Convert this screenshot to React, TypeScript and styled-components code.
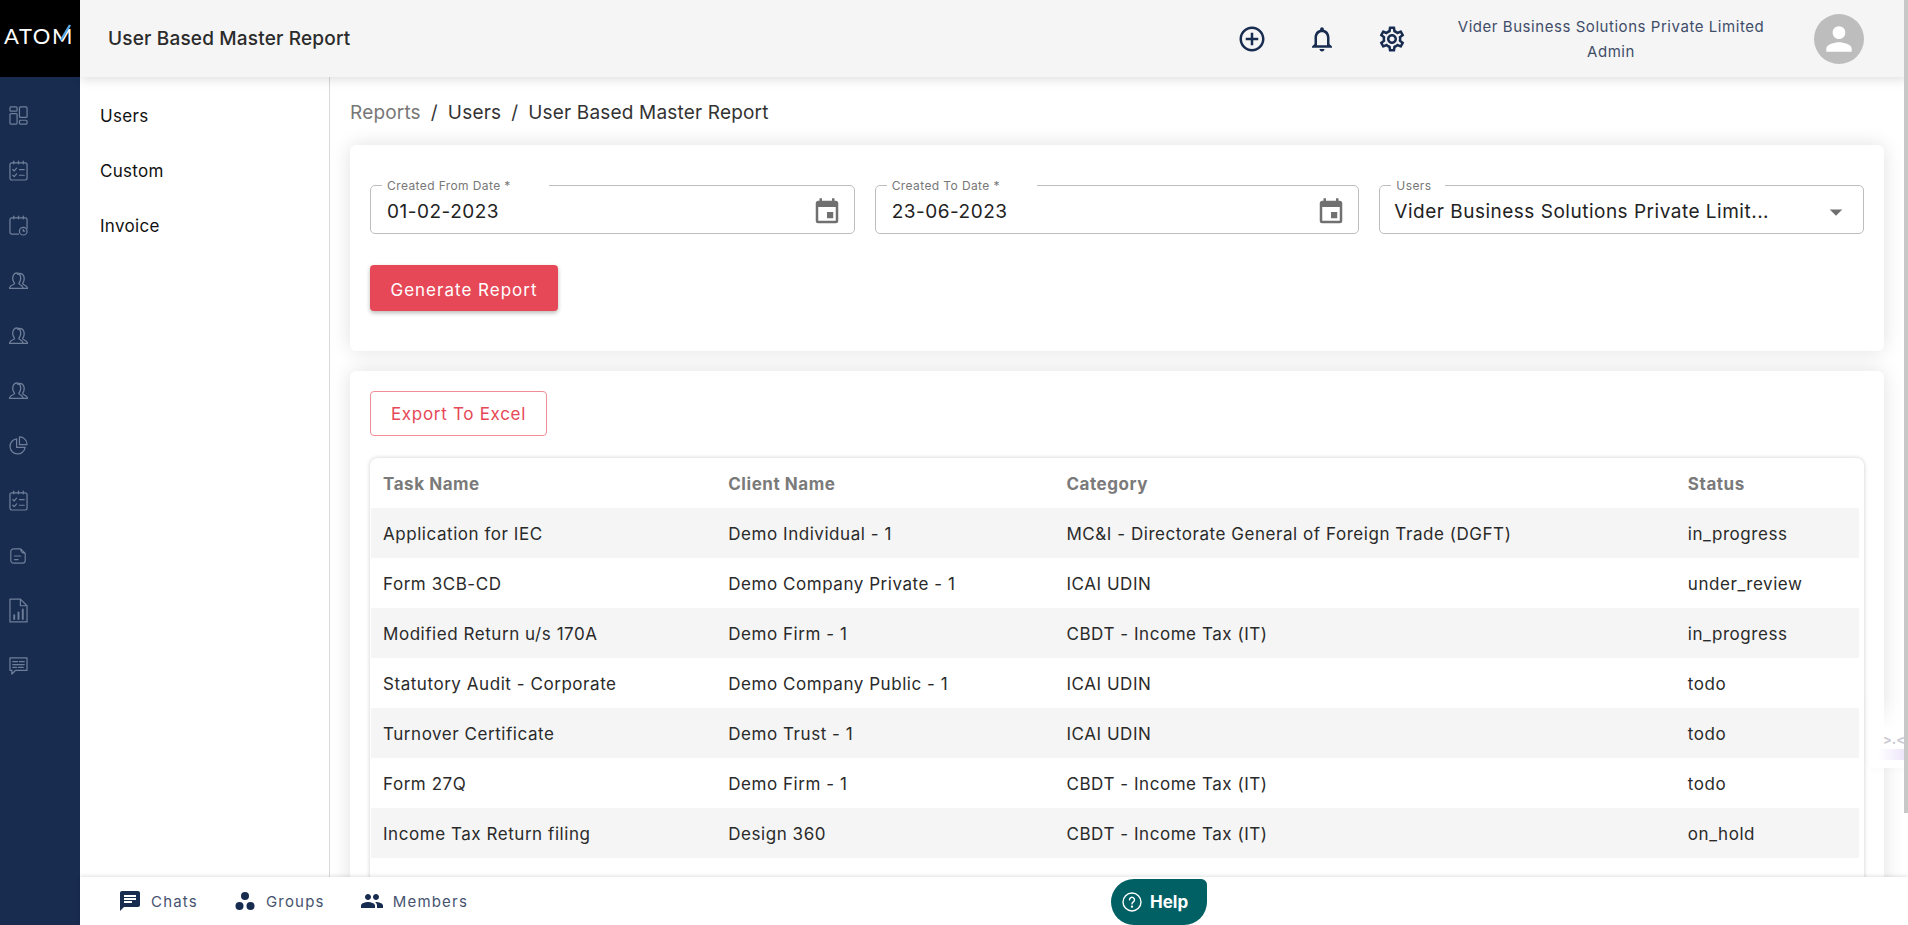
import * as React from "react";
import styled, { createGlobalStyle } from "styled-components";

const GlobalStyle = createGlobalStyle`
  html, body {
    margin: 0;
    height: 100%;
    overflow: hidden;
    font-family: "Inter", "Noto Sans", sans-serif;
  }
  * { box-sizing: border-box; }
`;

const Shell = styled.div`
  display: flex;
  height: 925px;
  width: 1908px;
  position: relative;
  overflow: hidden;
`;

const Rail = styled.aside`
  width: 80px;
  flex: none;
  background: #182c50;
  display: flex;
  flex-direction: column;
`;

const Logo = styled.div`
  height: 77px;
  background: #000;
  color: #fff;
  font-family: "Lato", sans-serif;
  font-size: 22px;
  letter-spacing: 1.6px;
  display: flex;
  align-items: center;
  padding: 0 0 7px 4px;
  position: relative;
`;

const LogoTick = styled.svg`
  position: absolute;
  left: 59px;
  top: 23px;
`;

const RailIcons = styled.div`
  display: flex;
  flex-direction: column;
  padding-top: 11px;
`;

const RailIcon = styled.div`
  height: 55px;
  padding-left: 9px;
  display: flex;
  align-items: center;
  color: #6f7f99;
`;

const Main = styled.div`
  flex: 1;
  min-width: 0;
  display: flex;
  flex-direction: column;
`;

const TopBar = styled.header`
  height: 77px;
  flex: none;
  background: #f5f5f5;
  display: flex;
  align-items: center;
  padding: 0 44px 0 28px;
  box-shadow: 0 3px 10px rgba(0, 0, 0, 0.12);
  position: relative;
  z-index: 3;
`;

const PageTitle = styled.h1`
  margin: 0;
  font-size: 19px;
  font-weight: 500;
  color: #2b2b2b;
  letter-spacing: 0.18px;
  flex: 1;
`;

const TopIcons = styled.div`
  display: flex;
  gap: 40px;
  align-items: center;
  color: #182c50;
  margin-right: 39px;
`;

const Account = styled.div`
  width: 330px;
  text-align: center;
  font-size: 15px;
  line-height: 25px;
  letter-spacing: 0.55px;
  color: #3f4d69;
  margin-right: 38px;
`;

const Avatar = styled.div`
  width: 50px;
  height: 50px;
  border-radius: 50%;
  background: #bdbdbd;
  color: #fff;
  display: flex;
  align-items: center;
  justify-content: center;
`;

const Middle = styled.div`
  flex: 1;
  min-height: 0;
  display: flex;
`;

const SubNav = styled.nav`
  width: 250px;
  flex: none;
  background: #fff;
  border-right: 1px solid #d9d9d9;
  padding-top: 11px;
  display: flex;
  flex-direction: column;
`;

const SubNavItem = styled.a`
  height: 55px;
  padding-left: 20px;
  display: flex;
  align-items: center;
  font-size: 17px;
  letter-spacing: 0.3px;
  color: #111;
`;

const Content = styled.main`
  flex: 1;
  min-width: 0;
  background: #fff;
  padding: 0 20px;
  overflow: hidden;
  margin-right: 4px;
`;

const Crumbs = styled.div`
  height: 68px;
  display: flex;
  align-items: center;
  font-size: 19px;
  letter-spacing: 0.18px;
  color: #333;
  gap: 10px;
  padding-top: 3px;
`;

const Crumb = styled.span<{ $muted?: boolean }>`
  color: ${(p) => (p.$muted ? "#777" : "#333")};
`;

const Card = styled.section`
  background: #fff;
  border-radius: 6px;
  box-shadow: 0 0 20px rgba(0, 0, 0, 0.12);
  padding: 20px;
  margin-bottom: 20px;
`;

const FilterCard = styled(Card)`
  height: 206px;
  padding-top: 40px;
`;

const Fields = styled.div`
  display: grid;
  grid-template-columns: repeat(3, 1fr);
  gap: 20px;
`;

const Field = styled.fieldset`
  height: 54px;
  margin: -5px 0 0;
  padding: 0 12px 0 15px;
  border: 1px solid #bdbdbd;
  border-radius: 5px;
  display: flex;
  align-items: center;
  justify-content: space-between;
  min-width: 0;
`;

const FieldLabel = styled.legend<{ $w: number }>`
  font-size: 12px;
  letter-spacing: 0.4px;
  line-height: 11px;
  color: #777;
  padding: 0 0 0 5px;
  margin-left: -4px;
  width: ${(p) => p.$w}px;
  white-space: nowrap;
`;

const FieldValue = styled.span`
  font-size: 19px;
  letter-spacing: 0.5px;
  color: #222;
  padding: 0 0 1px 1px;
`;

const SelectValue = styled(FieldValue)`
  padding-left: 0;
  margin-left: -1px;
`;

const PrimaryButton = styled.button`
  display: block;
  margin-top: 31px;
  width: 188px;
  height: 46px;
  border: 0;
  border-radius: 4px;
  padding: 3px 0 0;
  background: #e64857;
  color: #fff;
  font: inherit;
  font-size: 17px;
  letter-spacing: 1px;
  box-shadow: 0 2px 4px rgba(0, 0, 0, 0.28);
`;

const OutlineButton = styled.button`
  display: block;
  width: 177px;
  height: 45px;
  padding: 1px 0 0;
  background: #fff;
  border: 1px solid #f08e98;
  border-radius: 4px;
  color: #e64857;
  font: inherit;
  font-size: 17px;
  letter-spacing: 0.7px;
`;

const TableBox = styled.div`
  margin-top: 22px;
  border-radius: 8px;
  box-shadow: 0 0 4px rgba(0, 0, 0, 0.2);
  padding: 0 5px 0 1px;
`;

const Table = styled.table`
  width: 100%;
  border-collapse: collapse;
  table-layout: fixed;
`;

const HeadCell = styled.th<{ $w: number }>`
  width: ${(p) => p.$w}px;
  height: 50px;
  text-align: left;
  padding: 1px 0 0 12px;
  font-size: 17px;
  font-weight: 700;
  letter-spacing: 0.55px;
  color: #7a7a7a;
`;

const Row = styled.tr`
  height: 50px;
  &:nth-child(odd) { background: #f5f5f5; }
`;

const Cell = styled.td`
  padding: 2px 0 0 12px;
  font-size: 17px;
  letter-spacing: 0.55px;
  color: #2a2a2a;
  white-space: nowrap;
`;

const Footer = styled.footer`
  height: 48px;
  flex: none;
  background: #fff;
  box-shadow: 0 -1px 4px rgba(0, 0, 0, 0.12);
  display: flex;
  align-items: center;
  padding-left: 38px;
  gap: 35px;
  position: relative;
  z-index: 2;
`;

const FooterTab = styled.div`
  display: flex;
  align-items: center;
  gap: 9px;
  font-size: 15px;
  letter-spacing: 1.2px;
  color: #46536f;
  & svg { color: #182c50; }
`;

const HelpButton = styled.div`
  position: absolute;
  left: 1111px;
  top: 879px;
  width: 96px;
  height: 46px;
  background: #006064;
  border-radius: 24px 6px 24px 24px;
  color: #fff;
  font-weight: 700;
  font-size: 17px;
  display: flex;
  align-items: center;
  gap: 8px;
  padding-left: 11px;
  z-index: 4;
`;

const ScrollThumb = styled.div`
  position: absolute;
  right: 0;
  top: 0;
  width: 4px;
  height: 813px;
  background: #c8c8c8;
  z-index: 4;
`;

const Widget = styled.div`
  position: absolute;
  right: 4px;
  top: 690px;
  width: 36px;
  height: 78px;
  background: linear-gradient(180deg, rgba(255, 255, 255, 0) 10%, #fff 50%);
  border-radius: 0 0 0 8px;
  box-shadow: 0 3px 6px rgba(0, 0, 0, 0.02);
  color: #c9c9cf;
  font-size: 13px;
  line-height: 14px;
  font-weight: 700;
  white-space: nowrap;
  padding: 42px 0 0 15px;
  z-index: 1;
  overflow: hidden;
  &::after {
    content: "";
    position: absolute;
    left: 10px;
    right: 0;
    bottom: 8px;
    height: 11px;
    background: linear-gradient(90deg, #fff, #eee6fa);
  }
`;

const line = { fill: "none", stroke: "currentColor", strokeWidth: 1.3, strokeLinecap: "round", strokeLinejoin: "round" } as const;

const People = () => (
  <svg width="19" height="17" viewBox="0 0 19 17" {...line}>
    <path d="M.5 16.500h18c0-2-2-3-4-4-.8-.4-1-1-.7-1.500.9-1 1.400-2.500 1.400-4.200 0-2.900-1.400-5.300-4-5.300-1 0-1.800.3-2.500.9" />
    <path d="M.5 16.500c0-2.300 2-3.200 4-4 .9-.4 1.200-1 .8-1.700C4.500 9.700 3.700 8.500 3.700 6.500c0-3 1.500-5.500 4-5.500s4 2.500 4 5.500c0 2-.8 3.200-1.600 4.300-.4.7-.1 1.300.8 1.700 1.500.7 2.800 1.500 3.400 4" />
  </svg>
);

const Checklist = () => (
  <svg width="19" height="21" viewBox="0 0 20 22" {...line}>
    <rect x="1" y="3" width="18" height="18" rx="2" />
    <path d="M5 1v3M10 1v3M15 1v3M4 10l1.500 1.500L8 8.500M4 16l1.500 1.500L8 14.500M11 10h5M11 16h5" />
  </svg>
);

const railIcons = [
  <svg width="19" height="19" viewBox="0 0 20 20" {...line}>
    <rect x="1" y="1" width="7.500" height="4.500" rx="1" /><rect x="1" y="8" width="7.500" height="11" rx="1" />
    <rect x="11" y="1" width="8" height="11" rx="1" /><rect x="11" y="15" width="8" height="4" rx="1" />
  </svg>,
  <Checklist />,
  <svg width="19" height="21" viewBox="0 0 20 22" {...line}>
    <path d="M10 20H3a2 2 0 0 1-2-2V5a2 2 0 0 1 2-2h14a2 2 0 0 1 2 2v9M5 1v3M10 1v3M15 1v3" />
    <circle cx="15" cy="17" r="4" /><path d="M15 15v2h1.500" />
  </svg>,
  <People />,
  <People />,
  <People />,
  <svg width="19" height="19" viewBox="0 0 20 20" {...line}>
    <path d="M8 3a8 8 0 1 0 9 9h-9z" /><path d="M11 1a8 8 0 0 1 8 8h-8z" />
  </svg>,
  <Checklist />,
  <svg width="18" height="18" viewBox="0 0 20 20" {...line}>
    <path d="M5 2h8l5 5v8a3 3 0 0 1-3 3H5a3 3 0 0 1-3-3V5a3 3 0 0 1 3-3zM13 2c0 3 1 5 5 5M6 10h7M6 14h4" />
  </svg>,
  <svg width="19" height="25" viewBox="0 0 20 26" {...line}>
    <path d="M1 1h11l7 7v17H1zM12 1v7h7" /><path d="M5.500 22v-4M10 22v-7M14.500 22V12" strokeWidth="2" />
  </svg>,
  <svg width="19" height="18" viewBox="0 0 20 19" {...line}>
    <path d="M1 1h18v13H7l-4 4v-4H1z" /><path d="M4 5h5M11 5h5M4 8h12M4 11h4M10 11h5" />
  </svg>,
];

const CalendarIcon = () => (
  <svg width="30" height="30" viewBox="0 0 24 24" fill="#707070">
    <path d="M17 12h-5v5h5v-5zM16 1v2H8V1H6v2H5c-1.110 0-2 .9-2 2v14a2 2 0 0 0 2 2h14a2 2 0 0 0 2-2V5a2 2 0 0 0-2-2h-1V1h-2zm3 18H5V8h14v11z" />
  </svg>
);

const rows = [
  ["Application for IEC", "Demo Individual - 1", "MC&I - Directorate General of Foreign Trade (DGFT)", "in_progress"],
  ["Form 3CB-CD", "Demo Company Private - 1", "ICAI UDIN", "under_review"],
  ["Modified Return u/s 170A", "Demo Firm - 1", "CBDT - Income Tax (IT)", "in_progress"],
  ["Statutory Audit - Corporate", "Demo Company Public - 1", "ICAI UDIN", "todo"],
  ["Turnover Certificate", "Demo Trust - 1", "ICAI UDIN", "todo"],
  ["Form 27Q", "Demo Firm - 1", "CBDT - Income Tax (IT)", "todo"],
  ["Income Tax Return filing", "Design 360", "CBDT - Income Tax (IT)", "on_hold"],
  ["", "", "", ""],
];

export default function App() {
  return (
    <Shell>
      <GlobalStyle />
      <Rail>
        <Logo>
          ATOM
          <LogoTick width="13" height="18" viewBox="0 0 13 18">
            <path d="M2 17L11 2" stroke="#5aa9e6" strokeWidth="2.400" fill="none" />
          </LogoTick>
        </Logo>
        <RailIcons>
          {railIcons.map((icon, i) => (
            <RailIcon key={i}>{icon}</RailIcon>
          ))}
        </RailIcons>
      </Rail>
      <Main>
        <TopBar>
          <PageTitle>User Based Master Report</PageTitle>
          <TopIcons>
            <svg width="30" height="30" viewBox="0 0 24 24" fill="currentColor">
              <path d="M13 7h-2v4H7v2h4v4h2v-4h4v-2h-4V7zm-1-5C6.480 2 2 6.480 2 12s4.480 10 10 10 10-4.480 10-10S17.520 2 12 2zm0 18c-4.410 0-8-3.590-8-8s3.590-8 8-8 8 3.590 8 8-3.590 8-8 8z" />
            </svg>
            <svg width="30" height="30" viewBox="0 0 24 24" fill="currentColor">
              <path d="M12 22c1.100 0 2-.9 2-2h-4c0 1.100.9 2 2 2zm6-6v-5c0-3.070-1.630-5.640-4.500-6.320V4c0-.83-.67-1.500-1.500-1.500s-1.500.67-1.500 1.500v.68C7.640 5.360 6 7.920 6 11v5l-2 2v1h16v-1l-2-2zm-2 1H8v-6c0-2.480 1.510-4.500 4-4.500s4 2.020 4 4.500v6z" />
            </svg>
            <svg width="30" height="30" viewBox="0 0 24 24" fill="currentColor">
              <path d="M19.430 12.980c.04-.32.07-.64.07-.98 0-.34-.03-.66-.07-.98l2.110-1.650c.19-.15.24-.42.12-.64l-2-3.460c-.09-.16-.26-.25-.44-.25-.06 0-.12.01-.17.03l-2.490 1c-.52-.4-1.080-.73-1.690-.98l-.38-2.650C14.460 2.180 14.250 2 14 2h-4c-.25 0-.46.18-.49.42l-.38 2.650c-.61.25-1.170.59-1.690.98l-2.490-1c-.06-.02-.12-.03-.18-.03-.17 0-.34.09-.43.25l-2 3.460c-.13.22-.07.49.12.64l2.110 1.650c-.04.32-.07.65-.07.98 0 .33.03.66.07.98l-2.110 1.650c-.19.15-.24.42-.12.64l2 3.460c.09.16.26.25.44.25.06 0 .12-.01.17-.03l2.490-1c.52.4 1.080.73 1.690.98l.38 2.650c.03.24.24.42.49.42h4c.25 0 .46-.18.49-.42l.38-2.650c.61-.25 1.170-.59 1.690-.98l2.490 1c.06.02.12.03.18.03.17 0 .34-.09.43-.25l2-3.460c.12-.22.07-.49-.12-.64l-2.110-1.650zm-1.980-1.710c.04.31.05.52.05.73 0 .21-.02.43-.05.73l-.14 1.130.89.7 1.080.84-.7 1.210-1.270-.51-1.040-.42-.9.68c-.43.32-.84.56-1.250.73l-1.060.43-.16 1.130-.2 1.350h-1.400l-.19-1.350-.16-1.130-1.060-.43c-.43-.18-.83-.41-1.230-.71l-.91-.7-1.060.43-1.270.51-.7-1.210 1.080-.84.89-.7-.14-1.130c-.03-.31-.05-.54-.05-.74s.02-.43.05-.73l.14-1.130-.89-.7-1.080-.84.7-1.210 1.270.51 1.040.42.9-.68c.43-.32.84-.56 1.250-.73l1.060-.43.16-1.130.2-1.350h1.390l.19 1.350.16 1.130 1.060.43c.43.18.83.41 1.230.71l.91.7 1.060-.43 1.270-.51.7 1.210-1.070.85-.89.7.14 1.130zM12 8c-2.210 0-4 1.790-4 4s1.790 4 4 4 4-1.790 4-4-1.790-4-4-4zm0 6c-1.100 0-2-.9-2-2s.9-2 2-2 2 .9 2 2-.9 2-2 2z" />
            </svg>
          </TopIcons>
          <Account>
            Vider Business Solutions Private Limited
            <br />
            Admin
          </Account>
          <Avatar>
            <svg width="38" height="38" viewBox="0 0 24 24" fill="currentColor">
              <path d="M12 12c2.210 0 4-1.790 4-4s-1.790-4-4-4-4 1.790-4 4 1.790 4 4 4zm0 2c-2.670 0-8 1.340-8 4v2h16v-2c0-2.660-5.330-4-8-4z" />
            </svg>
          </Avatar>
        </TopBar>
        <Middle>
          <SubNav>
            <SubNavItem>Users</SubNavItem>
            <SubNavItem>Custom</SubNavItem>
            <SubNavItem>Invoice</SubNavItem>
          </SubNav>
          <Content>
            <Crumbs>
              <Crumb $muted>Reports</Crumb>
              <span>/</span>
              <Crumb>Users</Crumb>
              <span>/</span>
              <Crumb>User Based Master Report</Crumb>
            </Crumbs>
            <FilterCard>
              <Fields>
                <Field>
                  <FieldLabel $w={167}>Created From Date *</FieldLabel>
                  <FieldValue>01-02-2023</FieldValue>
                  <CalendarIcon />
                </Field>
                <Field>
                  <FieldLabel $w={150}>Created To Date *</FieldLabel>
                  <FieldValue>23-06-2023</FieldValue>
                  <CalendarIcon />
                </Field>
                <Field>
                  <FieldLabel $w={54}>Users</FieldLabel>
                  <SelectValue>Vider Business Solutions Private Limit...</SelectValue>
                  <svg width="30" height="30" viewBox="0 0 24 24" fill="#707070">
                    <path d="M7 10l5 5 5-5z" />
                  </svg>
                </Field>
              </Fields>
              <PrimaryButton>Generate Report</PrimaryButton>
            </FilterCard>
            <Card>
              <OutlineButton>Export To Excel</OutlineButton>
              <TableBox>
                <Table>
                  <thead>
                    <tr>
                      <HeadCell $w={345}>Task Name</HeadCell>
                      <HeadCell $w={338}>Client Name</HeadCell>
                      <HeadCell $w={621}>Category</HeadCell>
                      <HeadCell $w={183}>Status</HeadCell>
                    </tr>
                  </thead>
                  <tbody>
                    {rows.map((r, i) => (
                      <Row key={i}>
                        {r.map((c, j) => (
                          <Cell key={j}>{c}</Cell>
                        ))}
                      </Row>
                    ))}
                  </tbody>
                </Table>
              </TableBox>
            </Card>
          </Content>
        </Middle>
        <Footer>
          <FooterTab>
            <svg width="24" height="24" viewBox="0 0 24 24" fill="currentColor">
              <path d="M20 2H4c-1.100 0-1.990.9-1.990 2L2 22l4-4h14c1.100 0 2-.9 2-2V4c0-1.100-.9-2-2-2zM6 9h12v2H6V9zm8 5H6v-2h8v2zm4-6H6V6h12v2z" />
            </svg>
            Chats
          </FooterTab>
          <FooterTab>
            <svg width="24" height="24" viewBox="0 0 24 24" fill="currentColor">
              <circle cx="12" cy="7" r="4" /><circle cx="6.500" cy="17" r="4" /><circle cx="17.500" cy="17" r="4" />
            </svg>
            Groups
          </FooterTab>
          <FooterTab>
            <svg width="24" height="24" viewBox="0 0 24 24" fill="currentColor">
              <path d="M16 11c1.660 0 2.990-1.340 2.990-3S17.660 5 16 5c-1.660 0-3 1.340-3 3s1.340 3 3 3zm-8 0c1.660 0 2.990-1.340 2.990-3S9.660 5 8 5C6.340 5 5 6.340 5 8s1.340 3 3 3zm0 2c-2.330 0-7 1.170-7 3.500V19h14v-2.500c0-2.330-4.670-3.500-7-3.500zm8 0c-.29 0-.62.020-.97.050 1.160.84 1.970 1.970 1.970 3.450V19h6v-2.500c0-2.330-4.670-3.500-7-3.500z" />
            </svg>
            Members
          </FooterTab>
        </Footer>
      </Main>
      <Widget>&gt;.&lt;</Widget>
      <ScrollThumb />
      <HelpButton>
        <svg width="20" height="20" viewBox="0 0 20 20" fill="none" stroke="currentColor" strokeWidth="1.400">
          <circle cx="10" cy="10" r="9" />
          <path d="M7.500 7.800a2.500 2.500 0 1 1 3.800 2.100c-.9.600-1.300 1-1.300 2" strokeLinecap="round" />
          <circle cx="10" cy="14.600" r=".5" fill="currentColor" />
        </svg>
        Help
      </HelpButton>
    </Shell>
  );
}
